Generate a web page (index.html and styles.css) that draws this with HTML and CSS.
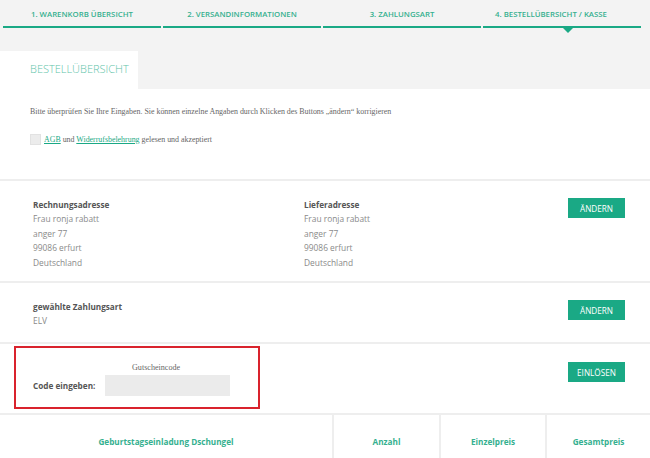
FILE: index.html
```html
<!DOCTYPE html>
<html lang="de">
<head>
  <meta charset="UTF-8" />
  <title>Bestellübersicht</title>
  <link rel="stylesheet" href="styles.css">
</head>
<body>
  <nav class="steps">
    <div class="step">1. Warenkorb Übersicht</div>
    <div class="step">2. Versandinformationen</div>
    <div class="step">3. Zahlungsart</div>
    <div class="step active">4. Bestellübersicht / Kasse</div>
  </nav>

  <div class="tab-head">Bestellübersicht</div>

  <div class="panel">
    <div class="intro">
      <p>Bitte überprüfen Sie Ihre Eingaben. Sie können einzelne Angaben durch Klicken des Buttons „ändern“ korrigieren</p>
      <label class="agb">
        <span class="check"></span>
        <span><a href="#">AGB</a> und <a href="#">Widerrufsbelehrung</a> gelesen und akzeptiert</span>
      </label>
    </div>

    <div class="section addresses">
      <div class="block">
        <h4>Rechnungsadresse</h4>
        <div>Frau ronja rabatt</div>
        <div>anger 77</div>
        <div>99086 erfurt</div>
        <div>Deutschland</div>
      </div>
      <div class="block">
        <h4>Lieferadresse</h4>
        <div>Frau ronja rabatt</div>
        <div>anger 77</div>
        <div>99086 erfurt</div>
        <div>Deutschland</div>
      </div>
      <button class="btn">Ändern</button>
    </div>

    <div class="section payment">
      <div class="block">
        <h4>gewählte Zahlungsart</h4>
        <div>ELV</div>
      </div>
      <div></div>
      <button class="btn">Ändern</button>
    </div>

    <div class="section coupon">
      <div class="coupon-box">
        <div class="coupon-label">Gutscheincode</div>
        <div class="coupon-row">
          <span class="code-label">Code eingeben:</span>
          <span class="code-input"></span>
        </div>
      </div>
      <button class="btn">Einlösen</button>
    </div>

    <div class="table-head">
      <div>Geburtstagseinladung Dschungel</div>
      <div>Anzahl</div>
      <div>Einzelpreis</div>
      <div>Gesamtpreis</div>
    </div>
  </div>
</body>
</html>
```

FILE: styles.css
```css
:root {
  --green: #1aa985;
  --green-text: #35b08f;
  --green-light: #62c4a9;
  --line: #eeeeee;
  --grey-text: #8a8a8a;
  --dark-text: #555;
  --serif-text: #666;
  --font: "Open Sans", "Noto Sans", sans-serif;
  --serif: "Liberation Serif", "Times New Roman", serif;
}

body {
  margin: 0;
  background: #f3f3f3;
  font-family: var(--font);
  height: 458px;
  overflow: hidden;
}

.steps {
  display: grid;
  grid-template-columns: repeat(4, 1fr);
  gap: 2px;
  padding: 0 9px 0 3px;
}

.step {
  position: relative;
  text-align: center;
  font-size: 7.8px;
  font-weight: 600;
  text-transform: uppercase;
  color: var(--green-text);
  padding-top: 9px;
  height: 17px;
  border-bottom: 2.5px solid var(--green);
}

.step.active {
  padding-right: 22px;
}

.step.active::after {
  content: "";
  position: absolute;
  left: 80px;
  bottom: -7px;
  border-left: 5px solid transparent;
  border-right: 5px solid transparent;
  border-top: 5px solid var(--green);
}

.tab-head {
  margin-top: 23px;
  width: 108px;
  padding: 0 0 0 30px;
  height: 38px;
  line-height: 36px;
  background: #fff;
  color: var(--green-light);
  font-size: 11px;
  font-weight: 300;
  text-transform: uppercase;
}

.panel {
  background: #fff;
}

.intro {
  box-sizing: border-box;
  height: 92px;
  padding: 18px 30px 0;
  border-bottom: 2px solid var(--line);
}

.intro p {
  margin: 0;
  font-family: var(--serif);
  font-size: 7.9px;
  color: var(--serif-text);
}

.agb {
  display: flex;
  align-items: center;
  gap: 3px;
  margin-top: 18px;
  font-family: var(--serif);
  font-size: 7.9px;
  color: var(--serif-text);
}

.agb a {
  color: var(--green);
}

.check {
  width: 9px;
  height: 9px;
  background: #ececec;
  border: 1px solid #e2e2e2;
}

.section {
  display: grid;
  grid-template-columns: 271px 1fr 57px;
  align-items: start;
  padding: 0 25px 0 33px;
  border-bottom: 2px solid var(--line);
}

.addresses {
  padding-top: 16px;
  height: 84px;
}

.payment {
  padding-top: 16px;
  height: 43px;
}

.block h4 {
  margin: 0;
  font-size: 8.2px;
  font-weight: 700;
  color: var(--dark-text);
  line-height: 15px;
}

.block div {
  font-size: 8.4px;
  color: var(--grey-text);
  line-height: 14.5px;
}

.btn {
  margin-top: 1px;
  width: 57px;
  height: 20px;
  border: none;
  padding: 0;
  background: var(--green);
  color: #fff;
  font-family: var(--font);
  font-size: 8.2px;
  text-transform: uppercase;
  cursor: pointer;
}

.coupon {
  grid-template-columns: 1fr 57px;
  padding: 2px 25px 4px 14px;
}

.coupon-box {
  width: 242px;
  height: 59px;
  border: 2px solid #d9232d;
}

.coupon .btn {
  margin-top: 16px;
}

.coupon-label {
  margin-top: 15px;
  padding-left: 116px;
  font-family: var(--serif);
  font-size: 8.1px;
  color: var(--serif-text);
}

.coupon-row {
  display: flex;
  align-items: center;
  margin-top: 3px;
  padding-left: 17px;
}

.code-label {
  width: 72px;
  font-size: 8.2px;
  font-weight: 700;
  color: var(--dark-text);
}

.code-input {
  width: 125px;
  height: 21px;
  background: #ebebeb;
}

.table-head {
  display: grid;
  grid-template-columns: 332px 107px 106px 1fr;
  height: 60px;
}

.table-head div {
  padding-top: 21px;
  text-align: center;
  font-size: 8.2px;
  font-weight: 700;
  color: var(--green-text);
  border-left: 2px solid var(--line);
}

.table-head div:first-child {
  border-left: none;
}
```
